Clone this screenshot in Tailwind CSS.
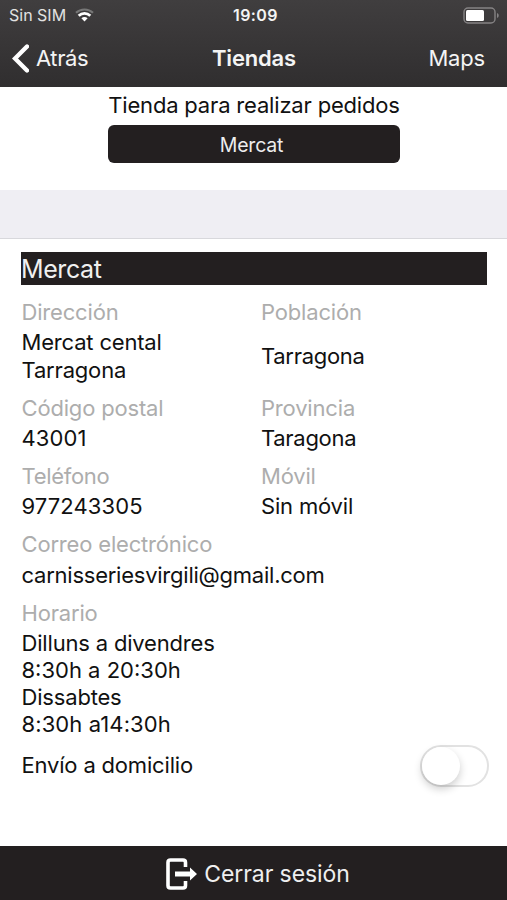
<!DOCTYPE html>
<html lang="es">

<head>
    <meta charset="utf-8">
    <title>Tiendas</title>
    <script src="https://cdn.jsdelivr.net/npm/@tailwindcss/browser@4"></script>
</head>

<body class="flex flex-col w-[507px] h-[900px] overflow-hidden bg-white text-[#111111] font-['Inter',sans-serif] text-[22px] leading-[27.2px] tracking-[-0.18px]">
    <header class="h-[87px] shrink-0 bg-linear-to-b from-[#403e3f] to-[#302e2f] text-[#f4f4f4]">
        <!-- status bar -->
        <div class="grid grid-cols-3 items-center h-[30px] pl-[9px] pr-[7px] text-[16px] leading-[20px] tracking-normal">
            <div class="flex items-center gap-[9px] text-[#e2e2e2]">
                <span>Sin SIM</span>
                <svg class="w-[19px] h-[14px]" viewBox="0 0 19 14" fill="none">
                    <path d="M1 4.8C5.8.4 13.2.4 18 4.8" stroke="#777" stroke-width="2.2" />
                    <path d="M3.7 7.8C7.1 4.6 11.9 4.6 15.3 7.8" stroke="#fff" stroke-width="2.8" />
                    <path d="M9.5 13.4L6.4 10.3C8.1 8.7 10.9 8.7 12.6 10.3Z" fill="#fff" />
                </svg>
            </div>
            <span class="text-center font-semibold tracking-[0.4px] pl-[2px]">19:09</span>
            <svg class="justify-self-end w-[37px] h-[17px]" viewBox="0 0 37 17" fill="none">
                <rect x="1" y="1" width="31" height="15" rx="4" stroke="#858384" stroke-width="1.4" />
                <rect x="3" y="3" width="18" height="11" rx="1.5" fill="#fff" />
                <path d="M34 6C36.3 7 36.3 10 34 11Z" fill="#858384" />
            </svg>
        </div>
        <nav class="grid grid-cols-3 items-center h-[56px] pl-[12px] pr-[22px] leading-[27px]">
            <a class="flex items-center gap-[7px] tracking-[-0.4px]">
                <svg class="w-[17px] h-[29px]" viewBox="0 0 17 29" fill="none" stroke="#fff" stroke-width="4.4" stroke-linecap="round" stroke-linejoin="miter">
                    <path d="M15 2.5L3 14.5L15 26.5" />
                </svg>
                <span>Atrás</span>
            </a>
            <h1 class="text-center font-semibold pl-[11px]">Tiendas</h1>
            <a class="text-right">Maps</a>
        </nav>
    </header>

    <section class="flex flex-col items-center h-[103px] shrink-0 pt-[5px]">
        <p class="whitespace-nowrap pl-px leading-[27px]">Tienda para realizar pedidos</p>
        <button class="w-[292px] h-[38px] mt-[6px] pr-1 pt-[3px] rounded-[6px] bg-[#231f20] text-[#ededed] text-[19.5px]">Mercat</button>
    </section>
    <div class="h-[49px] shrink-0 bg-[#efeef3] border-b border-[#d8d8dc]"></div>

    <main class="flex-1 pl-[21px] pr-5 pt-[13px]">
        <h2 class="h-[33px] bg-[#231f20] text-[#f0f0f0] text-[25px] leading-[34px] tracking-[-0.4px]">Mercat</h2>
        <dl class="grid grid-cols-[239.5px_1fr] gap-y-[10.8px] pt-[14px] pl-[0.5px] [&_dt]:text-[#adadad] [&_dt]:mb-[3.2px] [&_dd]:whitespace-nowrap">
            <div>
                <dt>Dirección</dt>
                <dd>Mercat cental<br>Tarragona</dd>
            </div>
            <div class="flex flex-col">
                <dt>Población</dt>
                <dd class="flex flex-1 items-center tracking-[-0.3px]">Tarragona</dd>
            </div>
            <div>
                <dt>Código postal</dt>
                <dd class="tracking-[0.1px]">43001</dd>
            </div>
            <div>
                <dt>Provincia</dt>
                <dd class="tracking-[-0.3px]">Taragona</dd>
            </div>
            <div>
                <dt class="tracking-[-0.3px]">Teléfono</dt>
                <dd class="tracking-[0.1px]">977243305</dd>
            </div>
            <div>
                <dt>Móvil</dt>
                <dd>Sin móvil</dd>
            </div>
            <div class="col-span-2">
                <dt>Correo electrónico</dt>
                <dd class="tracking-[-0.24px]">carnisseriesvirgili@gmail.com</dd>
            </div>
            <div class="col-span-2">
                <dt>Horario</dt>
                <dd class="leading-[27px]">Dilluns a divendres<br><span class="tracking-normal">8:30h a 20:30h</span><br>Dissabtes<br><span class="tracking-[0.1px]">8:30h a14:30h</span></dd>
            </div>
        </dl>
        <div class="flex items-center justify-between pl-[0.5px] mt-[6.5px] -mr-[2px]">
            <span>Envío a domicilio</span>
            <!-- home delivery switch, off -->
            <span class="flex w-[69px] h-[42px] rounded-full border-2 border-[#e2e2e2]">
                <span class="size-[38px] rounded-full bg-white shadow-[0_4px_8px_rgba(0,0,0,0.2)]"></span>
            </span>
        </div>
    </main>

    <footer class="flex items-center justify-center gap-[7px] h-[54px] shrink-0 pl-[9px] pt-[2px] bg-[#231f20] text-[#efefef] text-[23px] leading-[28px] tracking-[-0.1px]">
        <svg class="w-[31px] h-[32px]" viewBox="0 0 31 32" fill="none">
            <path d="M19.5 9V4.5Q19.5 2 17 2H4.5Q2 2 2 4.5V27.5Q2 30 4.5 30H17Q19.5 30 19.5 27.5V23" stroke="#fff" stroke-width="3.6" />
            <path d="M9 13.5H24V9.5L31 16L24 22.5V18.5H9Z" fill="#fff" />
        </svg>
        <span>Cerrar sesión</span>
    </footer>
</body>

</html>
